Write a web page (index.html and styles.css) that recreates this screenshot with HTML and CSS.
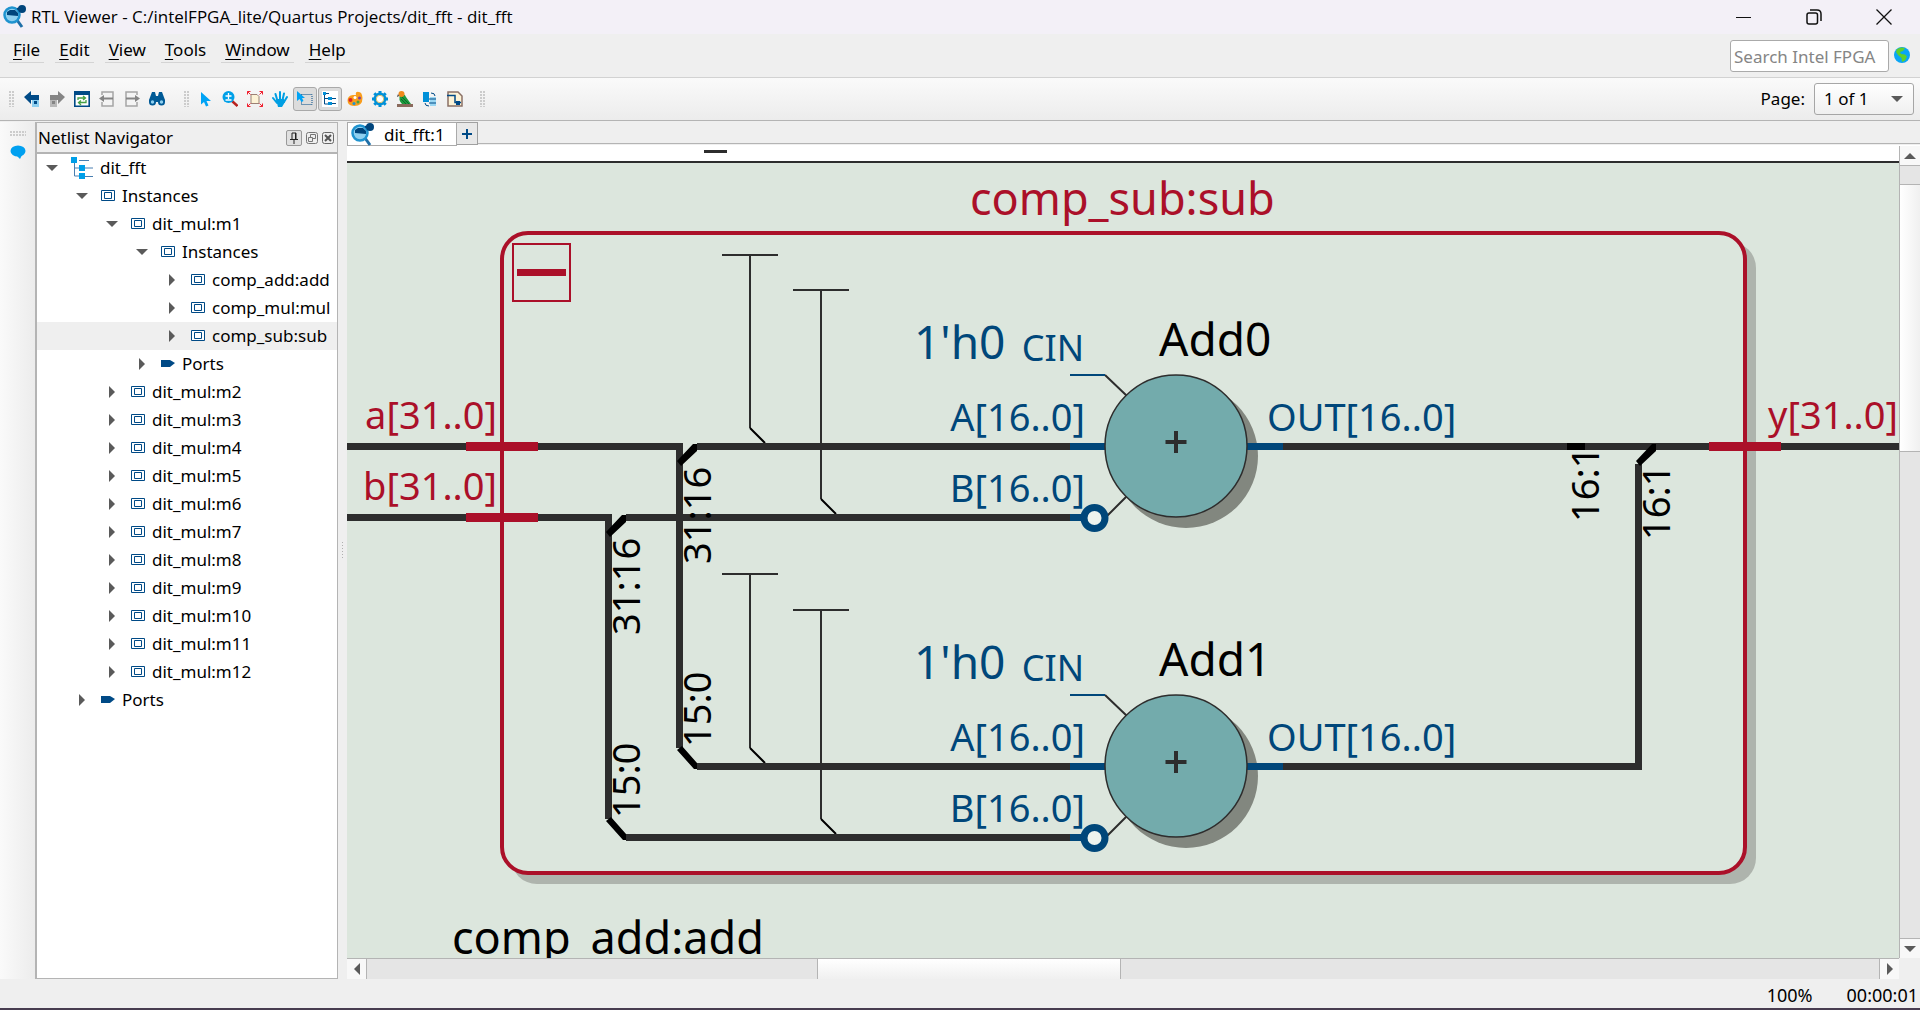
FILE: index.html
```html
<!DOCTYPE html>
<html lang="en">
<head>
<meta charset="utf-8">
<title>RTL Viewer</title>
<link rel="stylesheet" href="styles.css">
</head>
<body>
<svg class="defs" aria-hidden="true">
  <symbol id="app" viewBox="0 0 24 24"><path d="M15 15l5 7" stroke="#1f6fa8" stroke-width="3"/><circle cx="10" cy="10" r="7.500" fill="#8fd0f0" stroke="#1f93cf" stroke-width="2.500"/><path d="M5 10V7l3-2h5l3 3v3z" fill="#00457c"/><path d="M15 4l4-1" stroke="#00457c" stroke-width="2"/><circle cx="20" cy="4" r="4" fill="#00457c"/></symbol>
  <symbol id="inst" viewBox="0 0 14 12"><path d="M.5.5h13v10H.5zM3.500 2.500h7v6h-7z" fill="#fff" stroke="#004a86"/></symbol>
  <symbol id="port" viewBox="0 0 14 12"><path d="M0 2h9l5 3-5 4H0z" fill="#004a86"/></symbol>
  <symbol id="down" viewBox="0 0 12 12"><path d="M0 3h12L6 9z" fill="#5a5a5a"/></symbol>
  <symbol id="right" viewBox="0 0 12 12"><path d="M3 0l6 6-6 6z" fill="#5a5a5a"/></symbol>
</svg>

<header class="titlebar">
  <svg class="appicon"><use href="#app"/></svg>
  <h1 class="title">RTL Viewer - C:/intelFPGA_lite/Quartus Projects/dit_fft - dit_fft</h1>
  <button class="winbtn" aria-label="Minimize"><svg viewBox="0 0 16 16"><path d="M0 8.500h15" stroke="#111"/></svg></button>
  <button class="winbtn" aria-label="Restore"><svg viewBox="0 0 16 16"><rect x="1" y="4" width="10.500" height="11" rx="2" fill="none" stroke="#111" stroke-width="1.500"/><path d="M4 1h7q4 0 4 4v7" fill="none" stroke="#111" stroke-width="1.500"/></svg></button>
  <button class="winbtn" aria-label="Close"><svg viewBox="0 0 16 16"><path d="M.5.5l15 15M15.500.5l-15 15" stroke="#111" stroke-width="1.300"/></svg></button>
</header>

<div class="menubar">
  <nav class="menus">
    <button class="menu"><u>F</u>ile</button><button class="menu"><u>E</u>dit</button><button class="menu"><u>V</u>iew</button><button class="menu"><u>T</u>ools</button><button class="menu"><u>W</u>indow</button><button class="menu"><u>H</u>elp</button>
  </nav>
  <input class="search" type="text" placeholder="Search Intel FPGA" aria-label="Search Intel FPGA">
  <svg class="globe" viewBox="0 0 16 16"><circle cx="8" cy="8" r="8" fill="#0aa5f5"/><path d="M3 2l4-1.500L11 1 9 4l-3 1 1 2 4 .5 2 2-2 4-3 1.500-.5-4L4 8 2 5z" fill="#5fd02c"/></svg>
</div>

<div class="toolbar">
  <i class="grip"></i>
  <div class="tools history">
    <button class="tool" aria-label="Back"><svg viewBox="0 0 16 16"><path d="M0 6l7-6v4h8v5H7v4z" fill="#004a86"/><path d="M8 9h7v7H8z" fill="#8fd0f0"/><path d="M10 10h3v3h-3z" fill="#004a86"/></svg></button>
    <button class="tool" aria-label="Forward"><svg viewBox="0 0 16 16"><path d="M16 6L9 0v4H1v5h8v4z" fill="#858585"/><path d="M1 9h7v7H1z" fill="#b8b8b8"/><path d="M3 10h3v3H3z" fill="#858585"/></svg></button>
    <button class="tool" aria-label="Refresh"><svg viewBox="0 0 16 16"><path d="M.8 0h14.400v15.200H.8z" fill="#fff" stroke="#004a86" stroke-width="1.600"/><path d="M0 0h16v4H0z" fill="#004a86"/><path d="M4 9V7h7M9 5l2.500 2L9 9M12 9v2.500H5M7 9.500l-2.500 2L7 14" fill="none" stroke="#45a045" stroke-width="1.300"/></svg></button>
    <button class="tool" aria-label="Previous page"><svg viewBox="0 0 16 16"><path d="M3 4V1h11v14H3v-4" fill="#f4f4f4" stroke="#a5a5a5" stroke-width="1.500"/><path d="M0 7.500L5 4v2.500h9v2H5V11z" fill="#858585"/></svg></button>
    <button class="tool" aria-label="Next page"><svg viewBox="0 0 16 16"><path d="M13 4V1H2v14h11v-4" fill="#f4f4f4" stroke="#a5a5a5" stroke-width="1.500"/><path d="M16 7.500L11 4v2.500H2v2h9V11z" fill="#858585"/></svg></button>
    <button class="tool" aria-label="Find"><svg viewBox="0 0 16 16"><path d="M3 1h3l1 4h2l1-4h3l3 8v2H0V9z" fill="#005a96"/><circle cx="3.500" cy="11" r="3.500" fill="#005a96"/><circle cx="12.500" cy="11" r="3.500" fill="#005a96"/><circle cx="3.500" cy="11" r="1.700" fill="#8fd0f0"/><circle cx="12.500" cy="11" r="1.700" fill="#8fd0f0"/></svg></button>
  </div>
  <i class="grip"></i>
  <div class="tools">
    <button class="tool" aria-label="Select"><svg viewBox="0 0 16 16"><path d="M4 1v12.500l3-2.500 2 4.500 2.500-1L9.500 10H14z" fill="#00a3f5"/></svg></button>
    <button class="tool" aria-label="Zoom"><svg viewBox="0 0 16 16"><path d="M10 10l5.500 5" stroke="#b8231f" stroke-width="2.500"/><circle cx="6.500" cy="6" r="6" fill="#00a0e8"/><path d="M3.500 5h6M6.500 2v6M3.500 9h6" stroke="#fff" stroke-width="1.300"/></svg></button>
    <button class="tool" aria-label="Fit in window"><svg viewBox="0 0 16 16"><path d="M4 3.500h6l2 2v7H4z" fill="#fdf3d6" stroke="#9a8175"/><path d="M3.500 3.500L.5.5M.5 3.500v-3h3M12.500 3.500l3-3M12.500.5h3v3M3.500 12.500l-3 3M.5 12.500v3h3M12.500 12.500l3 3M15.500 12.500v3h-3" fill="none" stroke="#f01f2e"/></svg></button>
    <button class="tool" aria-label="Pan"><svg viewBox="0 0 16 16"><path d="M5.500 10L3.500 3M8 9V1M10.500 9L12 2.500M12 11l3-5M5 12L1 7" stroke="#009fe3" stroke-width="2" stroke-linecap="round"/><path d="M4 8l8 0 1 3-3 5H6z" fill="#009fe3"/></svg></button>
    <button class="tool pressed" aria-label="Area select"><svg viewBox="0 0 16 16"><path d="M4.500 3.500h10.500v10H4.500z" fill="none" stroke="#004a86" stroke-dasharray="1 1"/><path d="M0 0v10l2.500-2 2 3 2-1-1.500-3H8z" fill="#00a3f5"/></svg></button>
    <button class="tool pressed" aria-label="Netlist navigator"><svg viewBox="0 0 16 16"><path d="M0 0h16v16H0z" fill="#fff"/><path d="M2.500 2v11H6M2.500 7.500H14M2 2.500h5M8 12.500h6" fill="none" stroke="#004a86"/><path d="M1 1h3v3H1zM6 6h4v3H6zM6 11h4v3H6z" fill="#0090d8"/></svg></button>
    <button class="tool" aria-label="Colors"><svg viewBox="0 0 16 16"><path d="M1 12Q-1 5 6 4h3q-1-4 3-3 3 0 3.500 6 0 8-8 8-5 0-6.500-3z" fill="#f99d1c"/><circle cx="3.500" cy="9" r="2" fill="#d8232a"/><circle cx="8" cy="6.500" r="1.500" fill="#fff"/><circle cx="7" cy="12.500" r="1.500" fill="#1f93cf"/><circle cx="12.500" cy="7" r="1.500" fill="#7b3fa0"/><circle cx="11" cy="11" r="1.500" fill="#45a045"/></svg></button>
    <button class="tool" aria-label="Options"><svg viewBox="0 0 16 16"><path d="M8 0v16M0 8h16M2.300 2.300l11.400 11.400M13.700 2.300L2.300 13.700" stroke="#0090d8" stroke-width="3"/><circle cx="8" cy="8" r="5" fill="#fff" stroke="#0090d8" stroke-width="3"/><circle cx="8" cy="8" r="3.700" fill="#fff" stroke="#d9c06a"/></svg></button>
    <button class="tool" aria-label="Bird's eye view"><svg viewBox="0 0 16 16"><path d="M0 13h16v3H0z" fill="#8a6a5c"/><path d="M3 4q5-2 6 2l5 7H5Q1 9 3 4z" fill="#1d9a3d"/><path d="M5 6l7 7M4 8l5 5" stroke="#0a6b2a"/><circle cx="4.500" cy="3" r="3" fill="#f08a1c"/><path d="M1 3L0 6l2-1z" fill="#333"/></svg></button>
    <button class="tool" aria-label="Swap"><svg viewBox="0 0 16 16"><path d="M1 1h6v10H1z" fill="#0090d8"/><path d="M8 6h6v9H8z" fill="#9ad6f2"/><path d="M9 2q4 0 4 3M3 12q0 3 4 3M7 8h7M7 12h7" fill="none" stroke="#004a86"/></svg></button>
    <button class="tool" aria-label="Schematic"><svg viewBox="0 0 16 16"><path d="M1 1h10l4 4v10H1z" fill="#fdf3d6" stroke="#8a7065" stroke-width="1.500"/><path d="M0 4.500h8v7h6" fill="none" stroke="#004a86" stroke-width="1.500"/><path d="M9 10h4v4H9z" fill="#004a86"/></svg></button>
  </div>
  <i class="grip"></i>
  <label class="pagelabel" for="page">Page:</label>
  <span class="combo"><select id="page"><option>1 of 1</option></select><svg><use href="#down"/></svg></span>
</div>

<main class="main">
  <aside class="rail"><i class="railgrip"></i><button class="chat" aria-label="Messages"><svg viewBox="0 0 16 14"><ellipse cx="8" cy="6" rx="7.500" ry="5.500" fill="#00a0f0"/><path d="M6 10h6l-2 4z" fill="#00a0f0"/></svg></button></aside>

  <section class="panel">
    <header class="panelhead">
      <h2>Netlist Navigator</h2>
      <button class="pin" aria-label="Pin"><svg viewBox="0 0 12 12"><path d="M4 7V1h4v6M2 7.500h8M6 8v4M7.500 1v6" fill="none" stroke="#222"/></svg></button>
      <button class="mini" aria-label="Float"><svg viewBox="0 0 12 12"><rect x=".5" y=".5" width="11" height="11" rx="2" fill="none" stroke="#777"/><path d="M2.500 5.500h4v4h-4zM4.500 5V2.500h5v4H7" fill="none" stroke="#777"/></svg></button>
      <button class="mini" aria-label="Close panel"><svg viewBox="0 0 12 12"><rect x=".5" y=".5" width="11" height="11" rx="2" fill="none" stroke="#666"/><path d="M3 3l6 6M9 3L3 9" stroke="#555" stroke-width="2"/></svg></button>
    </header>
    <ul class="tree">
      <li class="row l0"><svg class="arrow"><use href="#down"/></svg><svg class="root" viewBox="0 0 22 22"><path d="M3.500 3v16H9M3.500 11H22M8 3.500h10M14 19.500h8" fill="none" stroke="#4a7fb0"/><path d="M0 0h6v6H0zM8 8h6v6H8zM8 16h6v6H8z" fill="#009fe8"/></svg>dit_fft</li>
      <li class="row l1"><svg class="arrow"><use href="#down"/></svg><svg class="kind"><use href="#inst"/></svg>Instances</li>
      <li class="row l2"><svg class="arrow"><use href="#down"/></svg><svg class="kind"><use href="#inst"/></svg>dit_mul:m1</li>
      <li class="row l3"><svg class="arrow"><use href="#down"/></svg><svg class="kind"><use href="#inst"/></svg>Instances</li>
      <li class="row l4"><svg class="arrow"><use href="#right"/></svg><svg class="kind"><use href="#inst"/></svg>comp_add:add</li>
      <li class="row l4"><svg class="arrow"><use href="#right"/></svg><svg class="kind"><use href="#inst"/></svg>comp_mul:mul</li>
      <li class="row l4 selected"><svg class="arrow"><use href="#right"/></svg><svg class="kind"><use href="#inst"/></svg>comp_sub:sub</li>
      <li class="row l3"><svg class="arrow"><use href="#right"/></svg><svg class="kind"><use href="#port"/></svg>Ports</li>
      <li class="row l2"><svg class="arrow"><use href="#right"/></svg><svg class="kind"><use href="#inst"/></svg>dit_mul:m2</li>
      <li class="row l2"><svg class="arrow"><use href="#right"/></svg><svg class="kind"><use href="#inst"/></svg>dit_mul:m3</li>
      <li class="row l2"><svg class="arrow"><use href="#right"/></svg><svg class="kind"><use href="#inst"/></svg>dit_mul:m4</li>
      <li class="row l2"><svg class="arrow"><use href="#right"/></svg><svg class="kind"><use href="#inst"/></svg>dit_mul:m5</li>
      <li class="row l2"><svg class="arrow"><use href="#right"/></svg><svg class="kind"><use href="#inst"/></svg>dit_mul:m6</li>
      <li class="row l2"><svg class="arrow"><use href="#right"/></svg><svg class="kind"><use href="#inst"/></svg>dit_mul:m7</li>
      <li class="row l2"><svg class="arrow"><use href="#right"/></svg><svg class="kind"><use href="#inst"/></svg>dit_mul:m8</li>
      <li class="row l2"><svg class="arrow"><use href="#right"/></svg><svg class="kind"><use href="#inst"/></svg>dit_mul:m9</li>
      <li class="row l2"><svg class="arrow"><use href="#right"/></svg><svg class="kind"><use href="#inst"/></svg>dit_mul:m10</li>
      <li class="row l2"><svg class="arrow"><use href="#right"/></svg><svg class="kind"><use href="#inst"/></svg>dit_mul:m11</li>
      <li class="row l2"><svg class="arrow"><use href="#right"/></svg><svg class="kind"><use href="#inst"/></svg>dit_mul:m12</li>
      <li class="row l1"><svg class="arrow"><use href="#right"/></svg><svg class="kind"><use href="#port"/></svg>Ports</li>
    </ul>
  </section>

  <div class="splitter"><i></i></div>

  <section class="view">
    <div class="tabs">
      <button class="tab"><svg class="appicon"><use href="#app"/></svg>dit_fft:1</button>
      <button class="newtab" aria-label="New tab"><svg viewBox="0 0 10 10"><path d="M5 0v10M0 5h10" stroke="#004a86" stroke-width="2"/></svg></button>
    </div>
    <div class="stage">
      <svg class="schematic" role="img" aria-label="Netlist schematic">
        <g transform="translate(-347 -146)">
          <path class="paper" d="M340 162h6000v3000H340z"/>
          <path d="M340 162h6000" stroke="#2d2d2d" stroke-width="2"/>
          <path d="M704 151.500h23" stroke="#2d2d2d" stroke-width="3"/>
          <rect x="511" y="242" width="1245" height="642" rx="26" fill="#aeb4ad"/>
          <rect x="502" y="233" width="1243" height="640" rx="26" fill="#dce6dd" stroke="#ab1029" stroke-width="4"/>
          <path d="M513 244h57v57h-57z" fill="none" stroke="#ab1029" stroke-width="2"/>
          <path d="M517 269h49v7h-49z" fill="#ab1029"/>

          <g class="thin">
            <path d="M722 255h56M750 255v173M793 290h56M821 290v209M722 574h56M750 574v174M793 610h56M821 610v209"/>
            <path class="tap" d="M750 428l15 15M821 499l15 15M750 748l15 15M821 819l15 15"/>
          </g>
          <g class="bus">
            <path d="M340 446.500H679.500V748M340 517.500H608.500V819"/>
            <path d="M697 446.500h373M626 517.500h444M697 766.500h373M626 837.500h444"/>
            <path d="M1283 446.500H6000M1283 766.500H1638.500V464"/>
          </g>
          <path class="paper" d="M683 442h14v4l-14 14zM612 513h14v4l-14 14z"/>
          <path d="M693 444h4v7l-16 15-4-5zM622 515h4v7l-16 15-4-5zM1652 444h4v7l-16 15-4-5zM677 750l5-4 15 17v6l-3 0zM606 821l5-4 15 17v6l-3 0zM1567 443h18v7h-18z"/>
          <path d="M466 446.500h72M466 517.500h72M1709 446.500h72" stroke="#ab1029" stroke-width="9"/>

          <g id="adder">
            <circle cx="1186" cy="456" r="72" fill="#82877f"/>
            <path class="thin" d="M1105 375l22 21M1107 516l20-20"/>
            <path d="M1070 375h35" stroke="#00477a" stroke-width="2"/>
            <path d="M1070 446.500h36M1247 446.500h36M1070 517.500h14" stroke="#00477a" stroke-width="7"/>
            <circle cx="1176" cy="446" r="71" fill="#73abac" stroke="#2d2d2d" stroke-width="1.500"/>
            <circle cx="1094.500" cy="518" r="10.500" fill="#eef4ee" stroke="#00477a" stroke-width="7"/>
            <path d="M1165.500 442h21M1176 431v22" stroke="#2d2d2d" stroke-width="4"/>
          </g>
          <use href="#adder" y="320"/>

          <g class="big">
            <text class="name red" x="970" y="215">comp_sub:sub</text>
            <text x="1159" y="356">Add0</text>
            <text x="1159" y="676">Add1</text>
            <text class="blue" x="914" y="359">1'h0</text>
            <text class="blue" x="914" y="679">1'h0</text>
            <text class="name" x="452" y="954">comp_add:add</text>
          </g>
          <g class="mid">
            <g class="end red"><text x="497" y="429">a[31..0]</text><text x="497" y="500">b[31..0]</text><text x="1898" y="429">y[31..0]</text></g>
            <g class="end blue">
              <text class="cin" x="1084" y="361">CIN</text><text x="1085" y="431">A[16..0]</text><text x="1085" y="502">B[16..0]</text>
              <text class="cin" x="1084" y="681">CIN</text><text x="1085" y="751">A[16..0]</text><text x="1085" y="822">B[16..0]</text>
            </g>
            <g class="blue"><text x="1267" y="431">OUT[16..0]</text><text x="1267" y="751">OUT[16..0]</text></g>
            <text transform="translate(711 564) rotate(-90)">31:16</text>
            <text transform="translate(640 635) rotate(-90)">31:16</text>
            <text transform="translate(711 747) rotate(-90)">15:0</text>
            <text transform="translate(640 818) rotate(-90)">15:0</text>
            <text transform="translate(1599 522) rotate(-90)">16:1</text>
            <text transform="translate(1670 540) rotate(-90)">16:1</text>
          </g>
        </g>
      </svg>
      <div class="vbar"><button aria-label="Scroll up"><svg viewBox="0 0 12 12"><path d="M0 9h12L6 3z" fill="#5a5a5a"/></svg></button><div class="vthumb"></div><button aria-label="Scroll down"><svg><use href="#down"/></svg></button></div>
      <div class="hbar"><button aria-label="Scroll left"><svg viewBox="0 0 12 12"><path d="M9 0L3 6l6 6z" fill="#5a5a5a"/></svg></button><div class="hthumb"></div><button aria-label="Scroll right"><svg><use href="#right"/></svg></button></div>
    </div>
  </section>
</main>

<footer class="status"><span>100%</span><span>00:00:01</span></footer>
</body>
</html>
```
FILE: styles.css
```css
* { box-sizing: border-box; }
body { margin: 0; min-height: 100vh; display: flex; flex-direction: column; background: #efefef; color: #000; font: 17px/24px "Noto Sans", sans-serif; }
button { border: 0; padding: 0; margin: 0; background: none; font: inherit; color: inherit; }
h1, h2 { margin: 0; font-size: inherit; font-weight: 400; }
svg { display: block; flex: none; }
.defs { position: absolute; width: 0; height: 0; }

.titlebar { display: flex; align-items: center; height: 34px; padding: 0 28px 0 2px; background: #f3f0f7; }
.appicon { width: 24px; height: 24px; }
.title { flex: 1; padding-left: 5px; font: 17px/24px "Open Sans", sans-serif; white-space: nowrap; }
.winbtn { width: 16px; margin-left: 54px; }
.winbtn svg { width: 16px; height: 16px; }

.menubar { display: flex; align-items: flex-start; height: 44px; padding: 6px 10px 0 9px; border-bottom: 1px solid #d2d2d2; }
.menus { display: flex; gap: 11px; flex: 1; margin-top: -3px; }
.menu { height: 26px; padding: 0 4px; border-bottom: 1px solid #d4d4d4; }
.menu u { text-underline-offset: 3px; text-decoration-thickness: 1px; }
.search { width: 159px; height: 32px; padding: 0 3px; border: 1px solid #aaa; border-radius: 3px; background: #fff; font: inherit; }
.search::placeholder { color: #858585; opacity: 1; }
.globe { width: 16px; height: 16px; margin: 7px 0 0 5px; }

.toolbar { display: flex; align-items: center; height: 43px; padding: 0 6px 0 9px; border-bottom: 1px solid #b4b4b4; background: linear-gradient(#fafafa, #ececec); }
.grip { width: 5px; height: 16px; background: radial-gradient(circle at 1px 1px, #ccc 1px, transparent 1px) 0 0 / 3px 3px; }
.tools { display: flex; margin: 0 13px 0 4px; gap: 1px; }
.tools.history { margin: 0 15px 0 6px; }
.tool { display: flex; align-items: center; justify-content: center; width: 24px; height: 24px; border: 1px solid transparent; border-radius: 3px; }
.tool svg { width: 16px; height: 16px; }
.pressed { border-color: #a9a9a9; background: #dcdcdc; }
.pagelabel { margin-left: auto; margin-right: 9px; }
.combo { display: flex; align-items: center; width: 100px; height: 32px; border: 1px solid #a6a6a6; border-radius: 3px; background: linear-gradient(#fff, #f0f0f0); }
.combo select { flex: 1; min-width: 0; height: 30px; padding: 0 0 0 9px; border: 0; appearance: none; background: none; font: inherit; color: inherit; }
.combo svg { width: 12px; height: 12px; margin-right: 10px; }

.main { display: flex; flex: 1; padding-top: 1px; }
.rail { display: flex; flex-direction: column; align-items: center; width: 35px; padding-top: 9px; gap: 9px; background: linear-gradient(90deg, #fafafa, #ececec); }
.railgrip { width: 16px; height: 5px; background: radial-gradient(circle at 1px 1px, #ccc 1px, transparent 1px) 0 0 / 3px 3px; }
.chat svg { width: 16px; height: 14px; }
.panel { width: 303px; border: 1px solid #b4b4b4; border-left-width: 2px; background: #fff; }
.panelhead { display: flex; align-items: center; height: 31px; padding: 0 3px 0 1px; gap: 4px; border-bottom: 2px solid #b4b4b4; background: #efefef; }
.panelhead h2 { flex: 1; }
.pin { display: grid; place-items: center; width: 16px; height: 16px; border: 1px solid #999; border-radius: 2px; background: #e0e0e0; }
.panelhead svg { width: 12px; height: 12px; }
.tree { margin: 0; padding: 0; list-style: none; }
.row { display: flex; align-items: center; height: 28px; white-space: nowrap; }
.selected { background: #efefef; }
.arrow { width: 12px; height: 12px; }
.kind { width: 14px; height: 12px; margin: 0 7px 0 13px; }
.root { width: 22px; height: 22px; margin: 0 7px 0 13px; }
.l0 { padding-left: 9px; }
.l1 { padding-left: 39px; }
.l2 { padding-left: 69px; }
.l3 { padding-left: 99px; }
.l4 { padding-left: 129px; }
.splitter { display: flex; align-items: center; justify-content: center; width: 9px; }
.splitter i { width: 1px; height: 17px; background: repeating-linear-gradient(#b0b0b0 0 1px, transparent 1px 3px); }

.view { display: flex; flex: 1; flex-direction: column; min-width: 0; }
.tabs { display: flex; align-items: flex-start; height: 24px; border-bottom: 1px solid #fff; background: linear-gradient(#b4b4b4, #b4b4b4) 0 21px / 100% 1px no-repeat; }
.tab { display: flex; width: 110px; height: 24px; padding-left: 2px; gap: 10px; border: 1px solid #aaa; background: #fff; white-space: nowrap; }
.newtab { display: grid; place-items: center; width: 21px; height: 23px; border: 1px solid #a0a0a0; border-left: 0; background: #e8e8e8; }
.newtab svg { width: 10px; height: 10px; }
.stage { display: grid; flex: 1; grid-template: minmax(0, 1fr) 21px / minmax(0, 1fr) 21px; }
.schematic { width: 100%; height: 100%; background: #fff; overflow: hidden; }
.paper { fill: #dce6dd; }
.thin { fill: none; stroke: #2d2d2d; stroke-width: 2; }
.tap { stroke: #000; }
.bus { fill: none; stroke: #2d2d2d; stroke-width: 7; }
.big { font-size: 46px; }
.name { font-size: 45px; }
.mid { font-size: 38px; }
.cin { font-size: 36px; }
.end { text-anchor: end; }
.red { fill: #ab1029; }
.blue { fill: #00477a; }
.vbar, .hbar { display: flex; background: #e5e5e5; }
.vbar { flex-direction: column; justify-content: space-between; border-left: 1px solid #b4b4b4; }
.hbar { justify-content: space-between; border-top: 1px solid #b4b4b4; }
.vbar button, .hbar button { display: grid; place-items: center; width: 20px; height: 20px; background: #f8f8f8; }
.vbar svg, .hbar svg { width: 12px; height: 12px; }
.vbar button { border-bottom: 1px solid #b4b4b4; }
.vbar button:last-child { border-top: 1px solid #b4b4b4; border-bottom: 0; }
.hbar button { border-right: 1px solid #b4b4b4; }
.hbar button:last-child { border-left: 1px solid #b4b4b4; border-right: 0; }
.vthumb { height: 33%; margin: 18px 0 auto; border: solid #b4b4b4; border-width: 1px 0; background: linear-gradient(90deg, #fff, #f0f0f0); }
.hthumb { flex: 0 0 304px; margin: 0 auto 0 29%; border: solid #b4b4b4; border-width: 0 1px; background: linear-gradient(#fff, #f0f0f0); }

.status { display: flex; justify-content: flex-end; gap: 34px; height: 31px; padding: 4px 2px 0; border-bottom: 2px solid #483c50; font-size: 18px; }
```
